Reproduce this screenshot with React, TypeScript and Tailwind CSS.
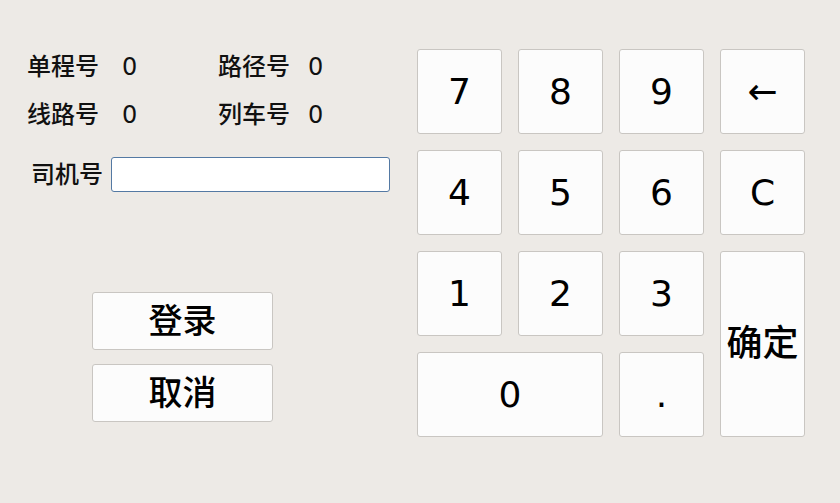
const cjk = { fontFamily: '"DejaVu Sans", "Noto Sans CJK SC", sans-serif' };

const keyCls =
  "flex items-center justify-center rounded-[3px] border border-[#c9c6c2] bg-[#fcfcfc] text-[36px] font-medium text-black";

const bigBtn =
  "flex h-[58px] w-[181px] items-center justify-center rounded-[3px] border border-[#c9c6c2] bg-[#fcfcfc] text-[34px] text-black";

export default function App() {
  return (
    <div className="flex h-[503px] w-[840px] bg-[#edeae6] font-medium" style={cjk}>
      {/* Left panel */}
      <div className="flex w-[417px] flex-col">
        <div className="grid grid-cols-[95px_96px_90px_1fr] gap-y-[24px] pl-[27px] pt-[55px] text-[24px] leading-none text-[#111]">
          <span>单程号</span>
          <span>0</span>
          <span>路径号</span>
          <span>0</span>
          <span>线路号</span>
          <span>0</span>
          <span>列车号</span>
          <span>0</span>
        </div>
        <div className="mt-[30px] flex items-center gap-[8px] pl-[31px]">
          <span className="text-[24px] leading-none text-[#111]">司机号</span>
          <input
            className="h-[35px] w-[279px] rounded-[3px] border border-[#5479a3] bg-white outline-none"
            readOnly
          />
        </div>
        <div className="mt-[100px] flex flex-col gap-[14px] pl-[92px]">
          <button className={bigBtn}>登录</button>
          <button className={bigBtn}>取消</button>
        </div>
      </div>

      {/* Keypad */}
      <div className="pt-[49px]">
        <div className="grid grid-cols-[repeat(4,85px)] grid-rows-[repeat(4,85px)] gap-x-[16px] gap-y-[16px]">
          <button className={keyCls}>7</button>
          <button className={keyCls}>8</button>
          <button className={keyCls}>9</button>
          <button className={keyCls}>←</button>
          <button className={keyCls}>4</button>
          <button className={keyCls}>5</button>
          <button className={keyCls}>6</button>
          <button className={keyCls}>C</button>
          <button className={keyCls}>1</button>
          <button className={keyCls}>2</button>
          <button className={keyCls}>3</button>
          <button className={`${keyCls} row-span-2`}>确定</button>
          <button className={`${keyCls} col-span-2`}>0</button>
          <button className={keyCls}>.</button>
        </div>
      </div>
    </div>
  );
}
